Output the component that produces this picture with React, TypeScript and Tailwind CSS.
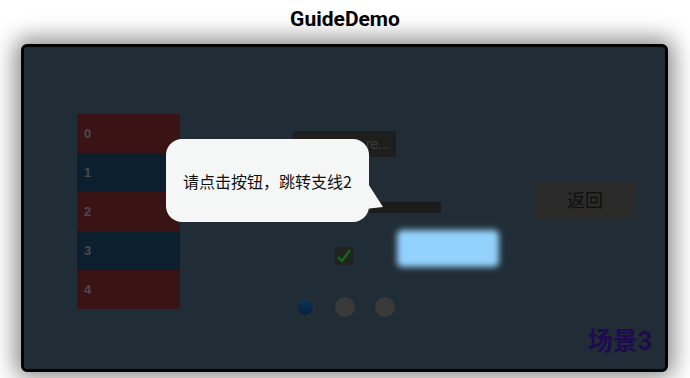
import React from "react";

const rows = [
  { n: "0", bg: "bg-[#3a1414]" },
  { n: "1", bg: "bg-[#0b1f2f]" },
  { n: "2", bg: "bg-[#3a1414]" },
  { n: "3", bg: "bg-[#0b1f2f]" },
  { n: "4", bg: "bg-[#3a1414]" },
];

const App = () => {
  return (
    <div className="w-[690px] h-[378px] bg-white overflow-hidden font-['Liberation_Sans','Noto_Sans_CJK_SC',sans-serif]">
      <h1 className="h-[38px] pt-[4px] text-center text-[21px] font-bold text-black font-['Roboto','Noto_Sans_CJK_SC',sans-serif]">
        GuideDemo
      </h1>
      <div className="relative ml-[21px] mt-[6px] w-[647px] h-[328px] rounded-[6px] border-[3px] border-black bg-[#212d36] shadow-[0_0_22px_6px_rgba(0,0,0,0.45)]">
        {/* list */}
        <div className="absolute left-[53px] top-[67px] w-[103px] flex flex-col">
          {rows.map((r) => (
            <div
              key={r.n}
              className={`h-[39px] ${r.bg} flex items-center pl-[7px] text-[13px] font-bold text-[#4a4a4a]`}
            >
              {r.n}
            </div>
          ))}
        </div>

        {/* top dark label */}
        <div className="absolute left-[269px] top-[84px] w-[103px] h-[26px] bg-[#1e1e1e] flex items-center justify-end pr-[6px] text-[14px] text-[#3c3c3c]">
          re...
        </div>

        {/* dark bar */}
        <div className="absolute left-[346px] top-[155px] w-[71px] h-[11px] bg-[#1c1c1c]" />

        {/* return button */}
        <div className="absolute left-[510px] top-[135px] w-[102px] h-[38px] bg-[#2a2a2a] flex items-center justify-center text-[18px] text-[#0f0f0f]">
          返回
        </div>

        {/* checkbox */}
        <div className="absolute left-[311px] top-[200px] w-[18px] h-[18px] bg-[#222222] flex items-center justify-center">
          <svg width="16" height="16" viewBox="0 0 16 16">
            <path d="M2 9 L6 13 L14 2" stroke="#0f6b12" strokeWidth="2.4" fill="none" />
          </svg>
        </div>

        {/* blurred blue box */}
        <div className="absolute left-[373px] top-[183px] w-[102px] h-[37px] rounded-[5px] bg-[#93d2fc] blur-[3px]" />

        {/* radios */}
        <div className="absolute left-[271px] top-[250px] flex gap-[20px]">
          <div className="w-[20px] h-[20px] rounded-full bg-[#2b2b2b] flex items-center justify-center">
            <div className="w-[16px] h-[16px] rounded-full bg-gradient-to-b from-[#0d3358] to-[#06213e]" />
          </div>
          <div className="w-[20px] h-[20px] rounded-full bg-[#3a3a3a]" />
          <div className="w-[20px] h-[20px] rounded-full bg-[#3a3a3a]" />
        </div>

        {/* scene label */}
        <div className="absolute right-[13px] bottom-[15px] text-[25px] leading-none font-bold text-[#1d0b4d] font-['Roboto','Noto_Sans_CJK_SC',sans-serif]">
          场景3
        </div>

        {/* guide bubble */}
        <div className="absolute left-[142px] top-[92px] w-[203px] h-[83px] rounded-[16px] bg-[#f5f6f6] flex items-center justify-center text-[16px] text-[#111111] font-['Noto_Sans_CJK_SC',sans-serif]">
          请点击按钮，跳转支线2
          <svg className="absolute left-[199px] top-[40px]" width="24" height="30" viewBox="0 0 24 30">
            <path d="M0 0 L18 28 L0 30 Z" fill="#f5f6f6" />
          </svg>
        </div>
      </div>
    </div>
  );
};

export default App;
